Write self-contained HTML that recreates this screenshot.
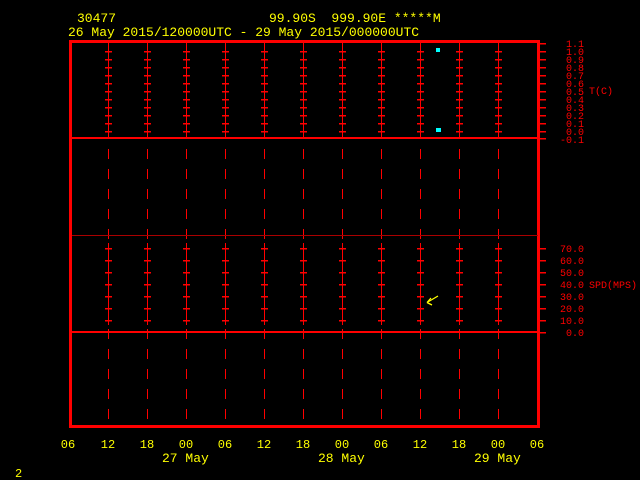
<!DOCTYPE html>
<html><head><meta charset="utf-8"><style>
html,body{margin:0;padding:0;background:#000;width:640px;height:480px;overflow:hidden}
svg{display:block}
text{font-family:"Liberation Mono","DejaVu Sans Mono",monospace}
</style></head><body>
<svg width="640" height="480" viewBox="0 0 640 480" xmlns="http://www.w3.org/2000/svg">
<defs>
<g id="col" fill="#f00" shape-rendering="crispEdges">
<rect x="0" y="43" width="1" height="94"/>
<rect x="-3" y="51" width="7" height="1.5"/><rect x="-3" y="59" width="7" height="1.5"/><rect x="-3" y="67" width="7" height="1.5"/>
<rect x="-3" y="75" width="7" height="1.5"/><rect x="-3" y="83" width="7" height="1.5"/><rect x="-3" y="91" width="7" height="1.5"/>
<rect x="-3" y="99" width="7" height="1.5"/><rect x="-3" y="107" width="7" height="1.5"/><rect x="-3" y="115" width="7" height="1.5"/>
<rect x="-3" y="123" width="7" height="1.5"/><rect x="-3" y="131" width="7" height="1.5"/>
<rect x="0" y="149" width="1" height="10"/><rect x="0" y="169" width="1" height="10"/><rect x="0" y="189" width="1" height="10"/>
<rect x="0" y="209" width="1" height="10"/><rect x="0" y="229" width="1" height="10"/>
<rect x="0" y="243" width="1" height="82"/>
<rect x="-3" y="248" width="7" height="1.5"/><rect x="-3" y="260" width="7" height="1.5"/><rect x="-3" y="272" width="7" height="1.5"/>
<rect x="-3" y="284" width="7" height="1.5"/><rect x="-3" y="296" width="7" height="1.5"/><rect x="-3" y="308" width="7" height="1.5"/>
<rect x="-3" y="320" width="7" height="1.5"/>
<rect x="0" y="329" width="1" height="10"/><rect x="0" y="349" width="1" height="10"/><rect x="0" y="369" width="1" height="10"/>
<rect x="0" y="389" width="1" height="10"/><rect x="0" y="409" width="1" height="10"/>
</g>
</defs>
<use href="#col" x="108"/><use href="#col" x="147"/><use href="#col" x="186"/><use href="#col" x="225"/>
<use href="#col" x="264"/><use href="#col" x="303"/><use href="#col" x="342"/><use href="#col" x="381"/>
<use href="#col" x="420"/><use href="#col" x="459"/><use href="#col" x="498"/>
<g fill="#f00" shape-rendering="crispEdges">
<rect x="69" y="40" width="471" height="3"/>
<rect x="69" y="425" width="471" height="3"/>
<rect x="69" y="40" width="3" height="388"/>
<rect x="537" y="40" width="3" height="388"/>
<rect x="72" y="137" width="466" height="2"/>
<rect x="72" y="331" width="466" height="2"/>
<rect x="72" y="235" width="466" height="1" fill="#a00"/>
<rect x="537" y="43" width="9" height="1.5"/><rect x="537" y="51" width="9" height="1.5"/><rect x="537" y="59" width="9" height="1.5"/>
<rect x="537" y="67" width="9" height="1.5"/><rect x="537" y="75" width="9" height="1.5"/><rect x="537" y="83" width="9" height="1.5"/>
<rect x="537" y="91" width="9" height="1.5"/><rect x="537" y="99" width="9" height="1.5"/><rect x="537" y="107" width="9" height="1.5"/>
<rect x="537" y="115" width="9" height="1.5"/><rect x="537" y="123" width="9" height="1.5"/><rect x="537" y="131" width="9" height="1.5"/>
<rect x="537" y="138" width="9" height="1.5"/>
<rect x="537" y="248" width="9" height="1.5"/><rect x="537" y="260" width="9" height="1.5"/><rect x="537" y="272" width="9" height="1.5"/>
<rect x="537" y="284" width="9" height="1.5"/><rect x="537" y="296" width="9" height="1.5"/><rect x="537" y="308" width="9" height="1.5"/>
<rect x="537" y="320" width="9" height="1.5"/><rect x="537" y="332" width="9" height="1.5"/>
</g>
<rect x="436" y="48" width="4" height="4" fill="#0ff"/>
<rect x="436" y="128" width="5" height="4" fill="#0ff"/>
<g stroke="#ff0" stroke-width="1.3" fill="none">
<path d="M438 296L427 302.5M427 302.5L431 298M427 302.5L432 305"/>
</g>
<g fill="#f00" font-size="10">
<text x="566" y="47">1.1</text><text x="566" y="55">1.0</text><text x="566" y="63">0.9</text>
<text x="566" y="71">0.8</text><text x="566" y="79">0.7</text><text x="566" y="87">0.6</text>
<text x="566" y="95">0.5</text><text x="566" y="103">0.4</text><text x="566" y="111">0.3</text>
<text x="566" y="119">0.2</text><text x="566" y="127">0.1</text><text x="566" y="135">0.0</text>
<text x="560" y="143">-0.1</text>
<text x="589" y="94">T(C)</text>
<text x="560" y="252">70.0</text><text x="560" y="264">60.0</text><text x="560" y="276">50.0</text>
<text x="560" y="288">40.0</text><text x="560" y="300">30.0</text><text x="560" y="312">20.0</text>
<text x="560" y="324">10.0</text><text x="566" y="336">0.0</text>
<text x="589" y="288">SPD(MPS)</text>
</g>
<g fill="#ff0" font-size="13">
<text x="77" y="22">30477</text>
<text x="269" y="22" xml:space="preserve">99.90S  999.90E *****M</text>
<text x="68" y="36">26 May 2015/120000UTC - 29 May 2015/000000UTC</text>
</g>
<g fill="#ff0" font-size="12" text-anchor="middle">
<text x="68" y="448">06</text><text x="108" y="448">12</text><text x="147" y="448">18</text>
<text x="186" y="448">00</text><text x="225" y="448">06</text><text x="264" y="448">12</text>
<text x="303" y="448">18</text><text x="342" y="448">00</text><text x="381" y="448">06</text>
<text x="420" y="448">12</text><text x="459" y="448">18</text><text x="498" y="448">00</text>
<text x="537" y="448">06</text>
</g>
<g fill="#ff0" font-size="13">
<text x="162" y="462">27 May</text><text x="318" y="462">28 May</text><text x="474" y="462">29 May</text>
<text x="15" y="477" font-size="12">2</text>
</g>
</svg>
</body></html>
